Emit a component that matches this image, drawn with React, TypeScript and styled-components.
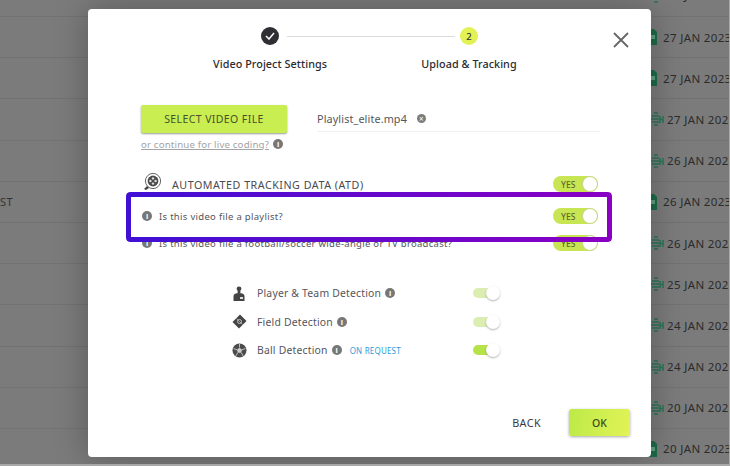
import styled, { createGlobalStyle } from 'styled-components';

const GlobalStyle = createGlobalStyle`
  html,
  body {
    margin: 0;
    padding: 0;
    background: #a8a8a8;
    font-family: 'Noto Sans', 'Open Sans', sans-serif;
  }
`;

const Page = styled.div`
  position: relative;
  width: 729px;
  height: 464px;
  overflow: hidden;
  background: #7b7b7b;
`;

const TableRows = styled.div`
  margin-top: -24.2px;
`;

const TableRow = styled.div`
  display: flex;
  align-items: center;
  justify-content: space-between;
  height: 41.2px;
  box-sizing: border-box;
  border-bottom: 1px solid #727272;
`;

const LeftCell = styled.span`
  font-size: 11px;
  letter-spacing: 0.4px;
  color: #333;
`;

const DateCell = styled.div`
  display: flex;
  align-items: center;
  width: 82px;
  flex-shrink: 0;
  white-space: nowrap;
  font-size: 11.5px;
  letter-spacing: 0.35px;
  color: #2b2b2b;
`;

const DocGap = styled.span<{ $glyph: boolean }>`
  display: inline-flex;
  margin-left: ${(p) => (p.$glyph ? '3px' : '0')};
  margin-right: ${(p) => (p.$glyph ? '3px' : '6px')};
`;

const Overlay = styled.div`
  position: absolute;
  top: 9px;
  left: 88px;
`;

const Modal = styled.div`
  position: relative;
  display: flex;
  flex-direction: column;
  width: 563px;
  height: 448px;
  box-sizing: border-box;
  padding-top: 18px;
  background: #fff;
  border-radius: 4px;
  box-shadow: 0 0 34px rgba(0, 0, 0, 0.28);
`;

const CloseButton = styled.button`
  position: absolute;
  top: 22px;
  right: 21px;
  display: flex;
  width: 18px;
  height: 18px;
  padding: 0;
  border: 0;
  background: none;
`;

const Stepper = styled.div`
  display: grid;
  grid-template-columns: 199px 199px;
  justify-content: center;
`;

const Step = styled.div<{ $connected?: boolean }>`
  position: relative;
  display: flex;
  flex-direction: column;
  align-items: center;
  gap: 12px;

  ${(p) =>
    p.$connected &&
    `
    &::before {
      content: '';
      position: absolute;
      top: 9px;
      left: -83px;
      width: 168px;
      height: 1px;
      background: #dcdcdc;
    }
  `}
`;

const StepCircle = styled.div<{ $active?: boolean }>`
  display: flex;
  align-items: center;
  justify-content: center;
  width: 18px;
  height: 18px;
  border-radius: 50%;
  font-size: 9.5px;
  font-weight: 500;
  color: #333;
  background: ${(p) => (p.$active ? '#e2f154' : '#2e2e33')};
`;

const StepLabel = styled.span`
  font-size: 10.8px;
  line-height: 14px;
  font-weight: 500;
  letter-spacing: 0.06px;
  color: #2b2b30;
`;

const Form = styled.div`
  display: flex;
  flex-direction: column;
  margin-top: 34px;
  padding: 0 51px 0 53px;
`;

const UploadRow = styled.div`
  display: flex;
  gap: 30px;
`;

const SelectButton = styled.button`
  width: 146px;
  height: 28px;
  padding: 0;
  border: 0;
  border-radius: 2px;
  background: #c9ee52;
  box-shadow: 0 1px 2px rgba(0, 0, 0, 0.4);
  font-family: inherit;
  font-size: 10.5px;
  letter-spacing: 0.4px;
  color: #47512a;
`;

const FileField = styled.div`
  flex: 1;
  display: flex;
  align-items: center;
  gap: 10px;
  height: 25px;
  margin-top: 1px;
  border-bottom: 1px solid #f1f1f1;
  font-size: 10.8px;
  letter-spacing: 0.12px;
  color: #55555a;
`;

const RemoveDot = styled.span`
  display: flex;
  align-items: center;
  justify-content: center;
  width: 9px;
  height: 9px;
  border-radius: 50%;
  background: #7c7c7c;
  color: #fff;
  font-size: 8px;
  line-height: 9px;
`;

const LiveCoding = styled.div`
  display: flex;
  align-items: center;
  gap: 4px;
  height: 14px;
  margin-top: 4px;
`;

const LiveLink = styled.a`
  font-size: 9.7px;
  letter-spacing: 0.16px;
  color: #a3a3a8;
  text-decoration: underline;
`;

const InfoDot = styled.span`
  display: inline-flex;
  flex-shrink: 0;
  align-items: center;
  justify-content: center;
  width: 10px;
  height: 10px;
  border-radius: 50%;
  background: #777;
  color: #fff;
  font-size: 7.5px;
  line-height: 10px;
  font-weight: 700;
`;

const OptionRow = styled.div<{ $top: number }>`
  display: flex;
  align-items: center;
  height: 16px;
  margin-top: ${(p) => p.$top}px;
  margin-right: 2px;
`;

const AtdIcon = styled.span`
  display: flex;
  width: 20px;
  margin-left: 1px;
  margin-right: 10px;
  margin-top: -5px;
`;

const AtdLabel = styled.span`
  margin-top: 2px;
  font-size: 10.7px;
  letter-spacing: 0.52px;
  color: #4a4a4f;
`;

const Question = styled.span`
  margin-left: 7px;
  font-size: 9.5px;
  letter-spacing: 0.3px;
  color: #55555a;
  white-space: nowrap;
`;

const QuestionInfo = styled(InfoDot)`
  margin-left: 1px;
`;

const YesToggle = styled.div`
  display: flex;
  align-items: center;
  width: 45px;
  height: 16px;
  margin-left: auto;
  padding-left: 8px;
  box-sizing: border-box;
  border-radius: 8px;
  background: #c8e653;
  position: relative;
  font-size: 8.5px;
  font-weight: 500;
  color: #5d6b2a;

  &::after {
    content: '';
    position: absolute;
    right: 0;
    top: 0;
    width: 16px;
    height: 16px;
    box-sizing: border-box;
    border-radius: 50%;
    background: #fff;
    border: 1px solid #c6d78c;
  }
`;

const DetectionList = styled.div`
  display: flex;
  flex-direction: column;
  gap: 12.5px;
  width: 268px;
  margin: 34px 0 0 91px;
`;

const DetectionRow = styled.div`
  display: flex;
  align-items: center;
  height: 16px;
`;

const DetectionIcon = styled.span`
  display: flex;
  justify-content: center;
  width: 16px;
  margin-left: -1px;
  margin-right: 10px;
`;

const DetectionLabel = styled.span`
  margin-right: 4px;
  font-size: 10.4px;
  letter-spacing: 0.2px;
  color: #55555a;
`;

const OnRequest = styled.span`
  margin-left: 8px;
  font-size: 8px;
  letter-spacing: 0.2px;
  color: #2f9bdc;
`;

const SmallToggle = styled.div<{ $on?: boolean }>`
  position: relative;
  width: 27px;
  height: 10px;
  margin-left: auto;
  border-radius: 5px 0 0 5px;
  background: linear-gradient(
    90deg,
    ${(p) => (p.$on ? '#b8e24a' : '#dcedb2')} 74%,
    transparent 74%
  );

  &::after {
    content: '';
    position: absolute;
    right: 0;
    top: -2px;
    width: 14px;
    height: 14px;
    border-radius: 50%;
    background: #fff;
    box-shadow: 0 1px 2px rgba(0, 0, 0, 0.3);
  }
`;

const Footer = styled.div`
  display: flex;
  align-items: center;
  justify-content: flex-end;
  gap: 28px;
  margin-top: auto;
  padding: 0 21px 21px 0;
`;

const BackButton = styled.button`
  padding: 0;
  border: 0;
  background: none;
  font-family: inherit;
  font-size: 10.8px;
  letter-spacing: 0.4px;
  color: #3a3a3f;
`;

const OkButton = styled.button`
  width: 61px;
  height: 27px;
  padding: 0;
  border: 0;
  border-radius: 3px;
  background: linear-gradient(100deg, #bcea48, #e2f356);
  box-shadow: 0 1px 3px rgba(0, 0, 0, 0.35);
  font-family: inherit;
  font-size: 10.5px;
  font-weight: 500;
  color: #3c4a20;
`;

const Highlight = styled.div`
  position: absolute;
  top: 183px;
  left: 38px;
  width: 486px;
  height: 50px;
  box-sizing: border-box;
  padding: 5px;
  border-radius: 4px;
  background: linear-gradient(90deg, #3f10d4, #8a00c4);
  -webkit-mask:
    linear-gradient(#000 0 0) content-box,
    linear-gradient(#000 0 0);
  -webkit-mask-composite: xor;
  mask-composite: exclude;
`;

const DocIcon = () => (
  <svg width="10" height="16" viewBox="0 0 10 16">
    <path d="M0 0h7l3 3v13H0z" fill="#1d6b48" />
    <path d="M2 6h6v4H2z" fill="#5f9f83" />
  </svg>
);

const SheetIcon = () => (
  <svg width="14" height="14" viewBox="0 0 14 14" fill="none" stroke="#2a7558" strokeWidth="1.5">
    <path d="M4 1h4M2 4h7M1 7h8M2 10h7M4 13h4" />
    <path d="M10 4v7M13 4v7M10 7.5h3" />
  </svg>
);

const CheckIcon = () => (
  <svg width="10" height="8" viewBox="0 0 10 8" fill="none" stroke="#fff" strokeWidth="1.5">
    <path d="M1 4l3 3 5-6" />
  </svg>
);

const CloseIcon = () => (
  <svg width="18" height="18" viewBox="0 0 18 18" fill="none" stroke="#666" strokeWidth="1.8">
    <path d="M2 2l14 14M16 2L2 16" />
  </svg>
);

const ReelIcon = () => (
  <svg width="20" height="20" viewBox="0 0 20 20">
    <circle cx="11" cy="9" r="7.6" fill="none" stroke="#555" strokeWidth="0.9" />
    <circle cx="11" cy="9" r="5.4" fill="#4a4a4a" />
    <circle cx="11" cy="6.4" r="1.2" fill="#ddd" />
    <circle cx="11" cy="11.6" r="1.2" fill="#ddd" />
    <circle cx="8.4" cy="9" r="1.2" fill="#ddd" />
    <circle cx="13.6" cy="9" r="1.2" fill="#ddd" />
    <path d="M5 14l-3 3 2 1 3-2z" fill="#444" />
  </svg>
);

const PlayerIcon = () => (
  <svg width="12" height="15" viewBox="0 0 12 15" fill="#444">
    <circle cx="6" cy="2.8" r="2.4" />
    <path d="M4.6 5h2.8v2H4.6z" />
    <path d="M0.5 15v-5C0.5 8 2.5 7 6 7s5.500 1 5.500 3v5z" />
    <path d="M7 11h3v2H7z" fill="#ddd" />
  </svg>
);

const FieldIcon = () => (
  <svg width="15" height="15" viewBox="0 0 15 15">
    <path d="M8 0.500l6.500 6.500-7.500 7.500-6.500-6.500z" fill="#444" />
    <circle cx="7.500" cy="7.500" r="2" fill="none" stroke="#ccc" strokeWidth="0.9" />
    <path d="M4.500 4.500l6 6" stroke="#ccc" strokeWidth="0.7" />
  </svg>
);

const BallIcon = () => (
  <svg width="15" height="15" viewBox="0 0 15 15">
    <circle cx="7.500" cy="7.500" r="7" fill="#4c4c4c" />
    <path d="M7.500 4.800l2.600 1.900-1 3h-3.200l-1-3z" fill="#ccc" />
    <path d="M7.500 1v3.500M1.500 5.500l3.500 1.300M13.500 5.500l-3.500 1.300M3.800 13l2-3.500M11.200 13l-2-3.500" stroke="#ccc" strokeWidth="0.9" />
  </svg>
);

const rows = [
  { date: '27 JAN 2023', sheet: true },
  { date: '27 JAN 2023', sheet: false },
  { date: '27 JAN 2023', sheet: false },
  { date: '27 JAN 2023', sheet: true },
  { date: '26 JAN 2023', sheet: true },
  { date: '26 JAN 2023', sheet: false, left: 'ST' },
  { date: '26 JAN 2023', sheet: true },
  { date: '25 JAN 2023', sheet: true },
  { date: '24 JAN 2023', sheet: true },
  { date: '24 JAN 2023', sheet: true },
  { date: '20 JAN 2023', sheet: true },
  { date: '20 JAN 2023', sheet: false },
];

const App = () => {
  return (
    <>
      <GlobalStyle />
      <Page>
        <TableRows>
          {rows.map((row, i) => (
            <TableRow key={i}>
              <LeftCell>{row.left}</LeftCell>
              <DateCell>
                <DocGap $glyph={row.sheet}>{row.sheet ? <SheetIcon /> : <DocIcon />}</DocGap>
                {row.date}
              </DateCell>
            </TableRow>
          ))}
        </TableRows>
        <Overlay>
          <Modal>
            <CloseButton>
              <CloseIcon />
            </CloseButton>
            <Stepper>
              <Step>
                <StepCircle>
                  <CheckIcon />
                </StepCircle>
                <StepLabel>Video Project Settings</StepLabel>
              </Step>
              <Step $connected>
                <StepCircle $active>2</StepCircle>
                <StepLabel>Upload &amp; Tracking</StepLabel>
              </Step>
            </Stepper>
            <Form>
              <UploadRow>
                <SelectButton>SELECT VIDEO FILE</SelectButton>
                <FileField>
                  Playlist_elite.mp4
                  <RemoveDot>×</RemoveDot>
                </FileField>
              </UploadRow>
              <LiveCoding>
                <LiveLink>or continue for live coding?</LiveLink>
                <InfoDot>i</InfoDot>
              </LiveCoding>
              <OptionRow $top={25}>
                <AtdIcon>
                  <ReelIcon />
                </AtdIcon>
                <AtdLabel>AUTOMATED TRACKING DATA (ATD)</AtdLabel>
                <YesToggle>YES</YesToggle>
              </OptionRow>
              <OptionRow $top={16}>
                <QuestionInfo>i</QuestionInfo>
                <Question>Is this video file a playlist?</Question>
                <YesToggle>YES</YesToggle>
              </OptionRow>
              <OptionRow $top={11}>
                <QuestionInfo>i</QuestionInfo>
                <Question>Is this video file a football/soccer wide-angle or TV broadcast?</Question>
                <YesToggle>YES</YesToggle>
              </OptionRow>
              <DetectionList>
                <DetectionRow>
                  <DetectionIcon>
                    <PlayerIcon />
                  </DetectionIcon>
                  <DetectionLabel>Player &amp; Team Detection</DetectionLabel>
                  <InfoDot>i</InfoDot>
                  <SmallToggle />
                </DetectionRow>
                <DetectionRow>
                  <DetectionIcon>
                    <FieldIcon />
                  </DetectionIcon>
                  <DetectionLabel>Field Detection</DetectionLabel>
                  <InfoDot>i</InfoDot>
                  <SmallToggle />
                </DetectionRow>
                <DetectionRow>
                  <DetectionIcon>
                    <BallIcon />
                  </DetectionIcon>
                  <DetectionLabel>Ball Detection</DetectionLabel>
                  <InfoDot>i</InfoDot>
                  <OnRequest>ON REQUEST</OnRequest>
                  <SmallToggle $on />
                </DetectionRow>
              </DetectionList>
            </Form>
            <Footer>
              <BackButton>BACK</BackButton>
              <OkButton>OK</OkButton>
            </Footer>
            <Highlight />
          </Modal>
        </Overlay>
      </Page>
    </>
  );
};

export default App;
